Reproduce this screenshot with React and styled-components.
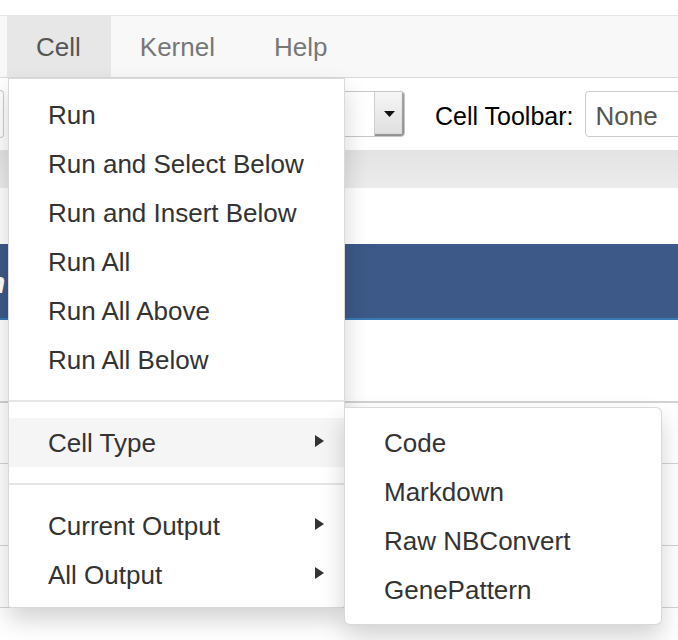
import React from "react";
import styled, { createGlobalStyle } from "styled-components";

const GlobalStyle = createGlobalStyle`
  html, body {
    margin: 0;
    padding: 0;
    background: #fff;
  }
  body {
    font-family: "Liberation Sans", Arial, sans-serif;
    overflow: hidden;
  }
  * {
    box-sizing: border-box;
  }
`;

const Page = styled.div`
  position: relative;
  width: 678px;
  height: 640px;
  overflow: hidden;
  background: #fff;
`;

const TopStrip = styled.div`
  height: 15px;
`;

const MenuBar = styled.nav`
  display: flex;
  height: 63px;
  padding-left: 7px;
  background: #f8f8f8;
  border-top: 1px solid #e7e7e7;
  border-bottom: 1px solid #dadada;
`;

const MenuBarItem = styled.div`
  padding: 1px 30px 0 29px;
  line-height: 61px;
  font-size: 26px;
  color: ${({ $open }) => ($open ? "#555" : "#777")};
  background: ${({ $open }) => ($open ? "#e7e7e7" : "transparent")};
`;

const Toolbar = styled.div`
  display: flex;
  align-items: center;
  height: 72px;

  & > * {
    flex-shrink: 0;
  }
`;

const ButtonStub = styled.div`
  width: 4px;
  height: 48px;
  border: 1px solid #ccc;
  border-left: none;
  border-radius: 0 4px 4px 0;
`;

const NativeSelect = styled.div`
  display: flex;
  width: 215px;
  height: 46px;
  margin-left: 186px;
  background: #fff;
  border: 1px solid #c6c6c6;
  border-radius: 4px;
  overflow: hidden;
`;

const SelectArrow = styled.div`
  display: flex;
  align-items: center;
  justify-content: center;
  width: 30px;
  margin-left: auto;
  background: linear-gradient(#f6f6f6, #dedede);
  border-left: 1px solid #cfcfcf;
  box-shadow: inset -2px -2px 1px rgba(0, 0, 0, 0.35);
`;

const ToolbarLabel = styled.span`
  margin: 4px 0 0 30px;
  font-size: 25px;
  color: #000;
  white-space: nowrap;
`;

const ValueSelect = styled.div`
  width: 130px;
  height: 46px;
  margin-left: 11px;
  padding: 2px 0 0 10px;
  line-height: 44px;
  font-size: 26px;
  color: #555;
  border: 1px solid #ccc;
  border-radius: 4px;
`;

const HeaderShade = styled.div`
  height: 38px;
  background: linear-gradient(#e3e3e3, #ececec);
`;

const Notebook = styled.div`
  padding-top: 56px;
`;

const HeadingCell = styled.div`
  height: 76px;
  padding-top: 22px;
  background: #3c5987;
  border-bottom: 2px solid #3a78b6;
  overflow: hidden;
`;

const HeadingText = styled.span`
  display: inline-block;
  margin-left: -13px;
  font-size: 30px;
  font-style: italic;
  font-weight: bold;
  color: #fff;
`;

const Gap = styled.div`
  height: 81px;
`;

const Row = styled.div`
  height: ${({ $h }) => $h}px;
  border-top: ${({ $w }) => $w || 1}px solid #d2d2d2;
`;

const Dropdown = styled.ul`
  position: absolute;
  top: 78px;
  left: 8px;
  width: 337px;
  margin: 0;
  padding: 11px 0 8px;
  list-style: none;
  font-size: 26px;
  color: #333;
  background: #fff;
  border: 1px solid rgba(0, 0, 0, 0.15);
  border-radius: 0 0 3px 3px;
  box-shadow: 0 12px 24px rgba(0, 0, 0, 0.175);
`;

const Item = styled.li`
  position: relative;
  display: flex;
  align-items: center;
  justify-content: space-between;
  height: 49px;
  padding: 1px 20px 0 39px;
  white-space: nowrap;
  background: ${({ $active }) => ($active ? "#f5f5f5" : "transparent")};
`;

const Divider = styled.li`
  height: 2px;
  margin: 16px 0;
  background: #e5e5e5;
`;

const Caret = styled.span`
  width: 0;
  height: 0;
  margin-top: -5px;
  border-left: 9px solid #333;
  border-top: 6.5px solid transparent;
  border-bottom: 6.5px solid transparent;
`;

const Submenu = styled(Dropdown)`
  top: -11px;
  left: 100%;
  width: 318px;
  padding: 10px 0;
  border-radius: 0 6px 6px 6px;
`;

const runItems = [
  "Run",
  "Run and Select Below",
  "Run and Insert Below",
  "Run All",
  "Run All Above",
  "Run All Below",
];

const cellTypes = ["Code", "Markdown", "Raw NBConvert", "GenePattern"];

const App = () => {
  return (
    <Page>
      <GlobalStyle />
      <TopStrip />
      <MenuBar>
        <MenuBarItem $open>Cell</MenuBarItem>
        <MenuBarItem>Kernel</MenuBarItem>
        <MenuBarItem>Help</MenuBarItem>
      </MenuBar>
      <Toolbar>
        <ButtonStub />
        <NativeSelect>
          <SelectArrow>
            <svg width="11" height="7" viewBox="0 0 11 7">
              <path d="M0 0h11L5.5 6z" fill="#111" />
            </svg>
          </SelectArrow>
        </NativeSelect>
        <ToolbarLabel>Cell Toolbar:</ToolbarLabel>
        <ValueSelect>None</ValueSelect>
      </Toolbar>
      <HeaderShade />
      <Notebook>
        <HeadingCell>
          <HeadingText>n</HeadingText>
        </HeadingCell>
        <Gap />
        <Row $w={2} $h={62} />
        <Row $h={82} />
        <Row $h={62} />
        <Row $h={1} />
      </Notebook>

      <Dropdown>
        {runItems.map((label) => (
          <Item key={label}>{label}</Item>
        ))}
        <Divider />
        <Item $active>
          Cell Type
          <Caret />
          <Submenu>
            {cellTypes.map((label) => (
              <Item key={label}>{label}</Item>
            ))}
          </Submenu>
        </Item>
        <Divider />
        <Item>
          Current Output
          <Caret />
        </Item>
        <Item>
          All Output
          <Caret />
        </Item>
      </Dropdown>
    </Page>
  );
};

export default App;
